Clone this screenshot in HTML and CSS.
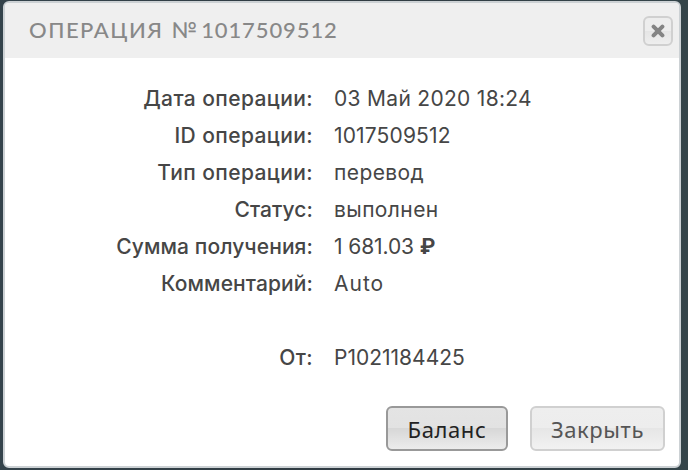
FILE: index.html
```html
<!DOCTYPE html>
<html lang="ru">
<head>
    <meta charset="UTF-8">
    <meta name="viewport" content="width=device-width, initial-scale=1.0">
    <title>Операция №1017509512</title>
    <link rel="stylesheet" href="styles.css">
</head>
<body>
    <div class="dialog">
        <div class="dialog-header">
            <h1><span class="title-word">ОПЕРАЦИЯ</span><span class="title-sign">№</span><span class="title-number">1017509512</span></h1>
            <button type="button" class="close-button" aria-label="Закрыть">
                <svg width="14" height="14" viewBox="0 0 14 14">
                    <path d="M2.6 2.6L11.4 11.4M11.4 2.6L2.6 11.4" stroke="#848484" stroke-width="4" stroke-linecap="round"/>
                </svg>
            </button>
        </div>
        <dl class="details">
            <dt class="wide">Дата операции:</dt>
            <dd class="date">03 Май 2020 18:24</dd>
            <dt class="wide">ID операции:</dt>
            <dd class="number">1017509512</dd>
            <dt class="wide">Тип операции:</dt>
            <dd class="wide">перевод</dd>
            <dt>Статус:</dt>
            <dd class="wide">выполнен</dd>
            <dt>Сумма получения:</dt>
            <dd class="amount">1 681.03 <span class="currency">₽</span></dd>
            <dt>Комментарий:</dt>
            <dd class="comment">Auto</dd>
            <dt class="sender wide">От:</dt>
            <dd class="sender">P1021184425</dd>
        </dl>
        <div class="dialog-buttons">
            <button type="button" class="button button-balance">Баланс</button>
            <button type="button" class="button button-close">Закрыть</button>
        </div>
    </div>
</body>
</html>
```
FILE: styles.css
```css
* {
    box-sizing: border-box;
}
body {
    margin: 0;
    height: 470px;
    padding: 1px 7px 2px 3px;
    background: linear-gradient(90deg, #34434b, #303b42 50%, #35454a);
    overflow: hidden;
}
.dialog {
    display: flex;
    flex-direction: column;
    height: 467px;
    background: #fff;
    border: 2px solid #ccd1d4;
    border-radius: 6px;
    overflow: hidden;
}
.dialog-header {
    display: flex;
    justify-content: space-between;
    align-items: center;
    height: 55px;
    padding: 0 6px 0 24px;
    background: #efefef;
}
h1 {
    display: flex;
    margin: 0;
    font: 500 22px/53px Lato, sans-serif;
    height: 55px;
    color: #888;
}
.title-word {
    letter-spacing: 1.5px;
}
.title-sign {
    margin-left: 8px;
}
.title-number {
    margin-left: 4px;
    letter-spacing: 0.9px;
}
.close-button {
    display: flex;
    align-items: center;
    justify-content: center;
    width: 30px;
    height: 30px;
    padding: 0;
    background: linear-gradient(#ededed 50%, #e5e5e5 50%, #eee);
    border: 2px solid #d0d0d0;
    border-radius: 6px;
}
.details {
    display: grid;
    grid-template-columns: 308px 1fr;
    grid-auto-rows: 37px;
    column-gap: 21px;
    margin: 22px 0 0;
    font: 21px/37px Inter, sans-serif;
    color: #464646;
}
dt {
    text-align: right;
    font-weight: 500;
    letter-spacing: 0.1px;
}
dd {
    margin: 0;
    white-space: nowrap;
}
.wide {
    letter-spacing: 0.4px;
}
.date {
    letter-spacing: 0.3px;
}
.number {
    letter-spacing: 0.15px;
}
.amount {
    letter-spacing: -0.1px;
}
.comment {
    letter-spacing: 1px;
}
.currency {
    font-weight: 700;
}
.sender {
    margin-top: 37px;
}
.dialog-buttons {
    display: flex;
    justify-content: flex-end;
    gap: 22px;
    margin-top: auto;
    padding: 0 14px 15px 0;
}
.button {
    height: 45px;
    padding: 0;
    font: 22px "Noto Sans", sans-serif;
    letter-spacing: 0.6px;
    border: 2px solid #999;
    border-radius: 6px;
    background: linear-gradient(#e4e4e4, #e2e2e2 50%, #d7d7d7 50%, #ececec);
    color: #222;
}
.button-balance {
    width: 122px;
}
.button-close {
    width: 135px;
    border-color: #d0d0d0;
    background: linear-gradient(#eee, #ededed 50%, #e6e6e6 50%, #f2f2f2);
    color: #555;
}
```
